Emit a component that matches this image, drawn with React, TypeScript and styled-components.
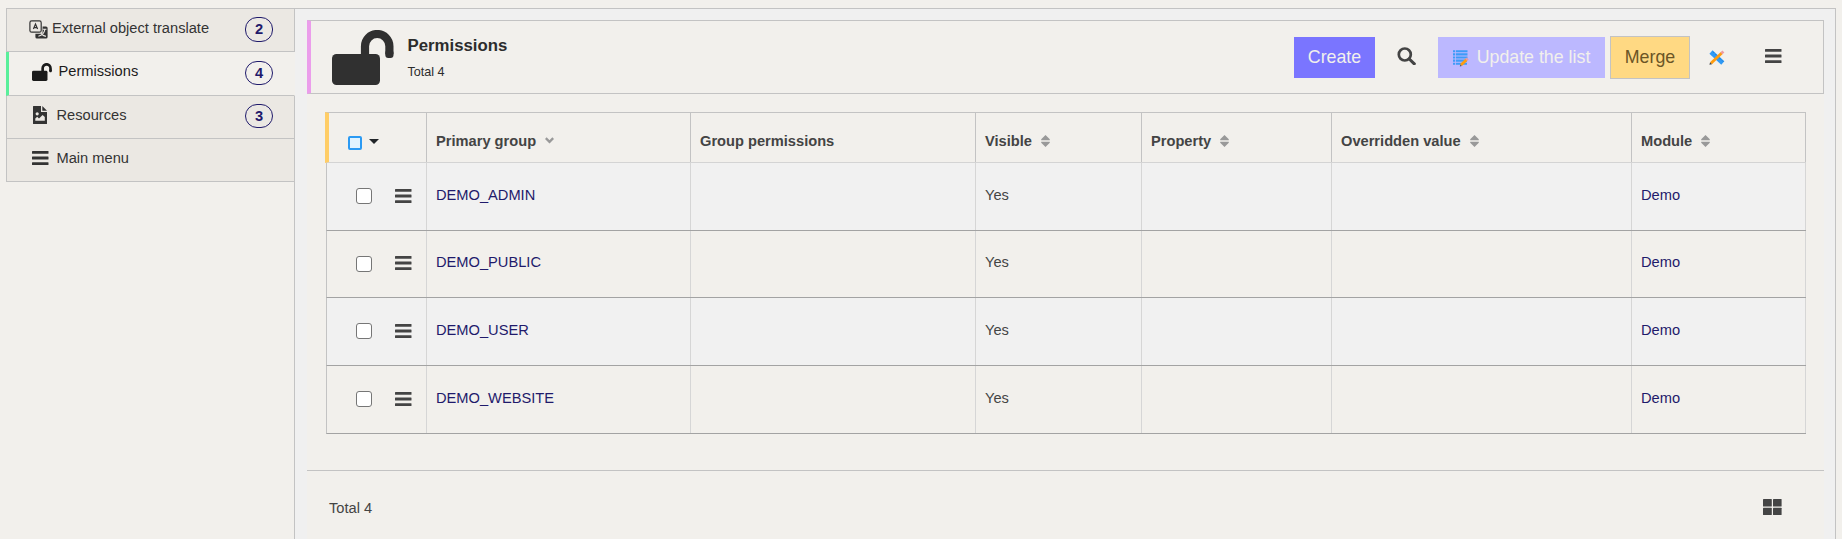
import React from "react";
import styled, { createGlobalStyle } from "styled-components";

const GlobalStyle = createGlobalStyle`
  * { box-sizing: border-box; }
  body { margin: 0; background: #f2f0ec; font-family: "Liberation Sans", Arial, sans-serif; font-size: 14.65px; color: #444; overflow: hidden; }
  svg { display: block; flex: none; }
`;

const line = "#c3c3c3";

const Page = styled.div`
  height: 539px;
  padding: 8px 6px 0;
  display: flex;
  background: #f2f0ec;
`;
const Sidebar = styled.nav`
  width: 289px;
  flex: none;
  border-top: 1px solid ${line};
  display: flex;
  flex-direction: column;
`;
const SideItem = styled.div<{ $h: number; $active?: boolean; $pad: number }>`
  height: ${(p) => p.$h}px;
  display: flex;
  flex: none;
  align-items: flex-start;
  padding: 0 21px 0 ${(p) => p.$pad}px;
  border-bottom: 1px solid ${line};
  border-left: ${(p) => (p.$active ? "3px solid #5aef9b" : `1px solid ${line}`)};
  border-right: 1px solid ${(p) => (p.$active ? "#f2f0ec" : line)};
  background: ${(p) => (p.$active ? "#f2f0ec" : "#ebe8e3")};
  color: ${(p) => (p.$active ? "#1b1b1b" : "#333")};
`;
const SideIcon = styled.span<{ $top: number; $w: number }>`
  width: ${(p) => p.$w}px;
  flex: none;
  padding-top: ${(p) => p.$top}px;
`;
const SideLabel = styled.span`
  flex: 1;
  line-height: 17px;
  padding-top: 11px;
`;
const Badge = styled.span<{ $top: number; $h?: number }>`
  width: 28px;
  height: ${(p) => p.$h ?? 24}px;
  margin-top: ${(p) => p.$top}px;
  border: 1px solid #1f1a6b;
  border-radius: 12px;
  color: #1f1a6b;
  font-weight: bold;
  line-height: ${(p) => (p.$h ?? 24) - 2}px;
  text-align: center;
`;
const SideRest = styled.div`
  flex: 1;
  border-right: 1px solid ${line};
`;

const Main = styled.main`
  flex: 1;
  padding: 11px 11px 0 12px;
  border: 1px solid ${line};
  border-width: 1px 1px 0 0;
  background: #f0f0f0;
  display: flex;
  flex-direction: column;
`;
const Header = styled.header`
  height: 74px;
  flex: none;
  display: flex;
  align-items: center;
  border: 1px solid ${line};
  border-left: 4px solid #eb9deb;
  padding: 0 41px 0 20.5px;
  background: #f2f0ec;
  color: #303030;
`;
const Titles = styled.div`
  flex: 1;
  padding-left: 14px;
  color: #2c2c2c;
`;
const Title = styled.h1`
  margin: 0 0 10px;
  font-size: 16.8px;
  line-height: 19px;
`;
const Subtitle = styled.div`
  font-size: 12.6px;
  line-height: 14px;
`;
const Button = styled.button<{ $kind: "primary" | "disabled" | "warn" }>`
  height: ${(p) => (p.$kind === "warn" ? 43 : 41)}px;
  width: ${(p) => ({ primary: 81, disabled: 167, warn: 80 })[p.$kind]}px;
  display: flex;
  align-items: center;
  justify-content: center;
  padding: 0;
  font: 17.8px "Liberation Sans", Arial, sans-serif;
  border: ${(p) => (p.$kind === "warn" ? `1px solid ${line}` : "0")};
  color: ${(p) => (p.$kind === "warn" ? "#6b5526" : "#f2f0ec")};
  background: ${(p) => ({ primary: "#7a75ff", disabled: "#bcb8ff", warn: "#ffd983" })[p.$kind]};
`;
const ToolIcon = styled.span<{ $l: number; $r: number; $up?: number }>`
  margin: 0 ${(p) => p.$r}px ${(p) => p.$up ?? 0}px ${(p) => p.$l}px;
  color: #444;
`;

const Content = styled.section`
  height: 377px;
  flex: none;
  padding: 18px 18px 0;
  border-bottom: 1px solid ${line};
  background: #f2f0ec;
`;
const Row = styled.div<{ $h?: number; $odd?: boolean }>`
  display: grid;
  grid-template-columns: 100px 264px 285px 166px 190px 300px 174px;
  width: 1480px;
  height: ${(p) => p.$h}px;
  margin-left: 1px;
  border-left: 1px solid ${line};
  border-bottom: 1px solid #a3a3a3;
  background: ${(p) => (p.$odd ? "#f1f1f1" : "#f2f0ec")};
`;
const HeadRow = styled(Row)`
  height: 51px;
  width: 1481px;
  margin-left: 0;
  border-top: 1px solid ${line};
  border-left: 4px solid #ffcd66;
  border-bottom: 1px solid #d4d4d4;
  grid-template-columns: 98px 264px 285px 166px 190px 300px 174px;
`;
const Cell = styled.div<{ $link?: boolean }>`
  border-right: 1px solid #d6d6d6;
  padding: 0 9px 4px;
  display: flex;
  align-items: center;
  color: ${(p) => (p.$link ? "#1f1a6b" : "#444")};
`;
const HeadCell = styled(Cell)`
  border-right-color: ${line};
  padding: 6px 9px 0;
  gap: 9px;
  font-weight: bold;
`;
const SelectAll = styled(HeadCell)`
  padding: 10px 0 0 19px;
  gap: 7px;
`;
const Caret = styled.svg`
  margin-bottom: 3px;
`;
const AllBox = styled.span`
  width: 14px;
  height: 14px;
  border: 2px solid #2b9af3;
  border-radius: 2px;
  background: #e0f3ff;
`;
const RowTools = styled(Cell)`
  padding: 0 0 1px 29px;
  gap: 23px;
  > svg { margin-bottom: 1px; }
`;
const Check = styled.input`
  appearance: none;
  width: 16px;
  height: 16px;
  margin: 0;
  border: 1px solid #767676;
  border-radius: 3px;
  background: #fff;
`;
const Footer = styled.footer`
  flex: 1;
  display: flex;
  justify-content: space-between;
  align-items: flex-start;
  padding: 28px 42px 0 22px;
  background: #f2f0ec;
`;
const FooterTotal = styled.span`
  padding-top: 1px;
`;

const Unlock = ({ w, h }: { w: number; h: number }) => (
  <svg width={w} height={h} viewBox="0 0 62 55" preserveAspectRatio="none" fill="currentColor">
    <rect x="0" y="24" width="48" height="31" rx="4.5" />
    <path d="M33 26V16a12.2 12.2 0 0 1 24.4 0v8" fill="none" stroke="currentColor" strokeWidth="8.2" transform="translate(0 .2)" />
    <rect x="53.3" y="20" width="8.2" height="8" rx="3" />
  </svg>
);
const Bars = () => (
  <svg width="17" height="14" viewBox="0 0 17 14" fill="currentColor">
    <rect width="16.5" height="2.8" rx=".5" /><rect y="5.6" width="16.5" height="2.8" rx=".5" /><rect y="11.2" width="16.5" height="2.8" rx=".5" />
  </svg>
);
const Translate = () => (
  <svg width="19" height="19" viewBox="0 0 19 19" fill="none" stroke="currentColor">
    <path d="M13.6 6.4H17a1.6 1.6 0 0 1 1.6 1.6v9a1.6 1.6 0 0 1-1.6 1.6H8a1.6 1.6 0 0 1-1.6-1.6v-3.2h5.6a1.6 1.6 0 0 0 1.6-1.6z" fill="currentColor" stroke="none" />
    <rect x=".9" y=".9" width="11.3" height="11.3" rx="1.8" strokeWidth="1.2" fill="#ebe8e3" />
    <path d="m4.4 9 2.1-5 2.1 5M5.1 7.6h2.8" strokeWidth="1.2" />
    <path d="M13.8 9.3h3.6M15.8 9.6c-.5 3-2.4 5.5-6.4 6.6M11.9 13.4c1.2 1.6 2.7 2.5 5 3" stroke="#ebe8e3" strokeWidth="1.1" />
  </svg>
);
const FileImage = () => (
  <svg width="14" height="18" viewBox="0 0 14 18">
    <path d="M.5 0H8v6h6v11.5a.5.5 0 0 1-.5.5H.5a.5.5 0 0 1-.5-.5V.5A.5.5 0 0 1 .5 0zM9.3 0 14 4.7H9.3z" fill="currentColor" />
    <circle cx="4.2" cy="7.8" r="1.6" fill="#ebe8e3" />
    <path d="M2.3 14.8v-2.3l1.9-1.8 1.8 1.7 3.6-3.5 2.2 2.1v3.8z" fill="#ebe8e3" />
  </svg>
);
const Search = () => (
  <svg width="19" height="18" viewBox="0 0 19 18" fill="none" stroke="#444">
    <circle cx="7.8" cy="7.5" r="6" strokeWidth="2.7" />
    <path d="m12.3 12 5 4.8" strokeWidth="3.1" strokeLinecap="round" />
  </svg>
);
const ListEdit = () => (
  <svg width="16" height="17" viewBox="0 0 16 17">
    <path d="M0 1.3h14.5M0 4.4h14.5M0 7.5h14.5M0 10.6h14M0 13.7h14" stroke="#3e9bf8" strokeWidth="2.1" />
    <path d="M2.5 0v15" stroke="#bcb8ff" strokeWidth=".8" />
    <path d="m8 15 5.5-5.3" stroke="#ff9c0d" strokeWidth="2.8" />
    <path d="m13.2 10 1.5-1.5" stroke="#e99aa5" strokeWidth="2.8" />
    <path d="m6.8 16.5.6-2 1.4 1.4z" fill="#555" />
  </svg>
);
const RulerPencil = () => (
  <svg width="16" height="15" viewBox="0 0 16 15">
    <path d="m2 2 11.8 11" stroke="#2f9af5" strokeWidth="4.6" />
    <path d="m4 1.8 1 1M6.5 4.2l1 1M10.8 8.3l1 1M13.2 10.5l1 1" stroke="#1565b8" strokeWidth=".7" />
    <path d="M2 13.2 12.7 3" stroke="#ff9c0d" strokeWidth="2.8" />
    <path d="m12.4 3.3 2-1.9" stroke="#ee9aa0" strokeWidth="2.8" />
    <path d="m.4 14.8.7-2.6 1.9 2z" fill="#444" />
  </svg>
);
const Sort = () => (
  <svg width="9" height="12" viewBox="0 0 9 12" fill="#999">
    <path d="M4.5 0 8.8 4.3V5.2H.2v-.9zM4.5 12 8.8 7.7V6.8H.2v.9z" />
  </svg>
);
const Chevron = () => (
  <svg width="9" height="7" viewBox="0 0 9 7" fill="none" stroke="#999" strokeWidth="2.4">
    <path d="m.8 1.2 3.7 3.6 3.7-3.6" />
  </svg>
);
const Tiles = () => (
  <svg width="19" height="16" viewBox="0 0 19 16" fill="#444">
    <rect width="8.8" height="7.5" rx=".6" /><rect x="10" width="8.6" height="7.5" rx=".6" />
    <rect y="8.7" width="8.8" height="7.3" rx=".6" /><rect x="10" y="8.7" width="8.6" height="7.3" rx=".6" />
  </svg>
);

const columns: [string, React.ReactNode][] = [
  ["Primary group", <Chevron />],
  ["Group permissions", null],
  ["Visible", <Sort />],
  ["Property", <Sort />],
  ["Overridden value", <Sort />],
  ["Module", <Sort />],
];
const rows: [string, number][] = [
  ["DEMO_ADMIN", 68],
  ["DEMO_PUBLIC", 67],
  ["DEMO_USER", 68],
  ["DEMO_WEBSITE", 68],
];

export default function App() {
  return (
    <>
      <GlobalStyle />
      <Page>
        <Sidebar>
          <SideItem $h={43} $pad={22}>
            <SideIcon $top={11} $w={23}><Translate /></SideIcon>
            <SideLabel>External object translate</SideLabel>
            <Badge $top={8} $h={25}>2</Badge>
          </SideItem>
          <SideItem $h={44} $pad={23} $active>
            <SideIcon $top={11} $w={26.5}><Unlock w={20} h={18} /></SideIcon>
            <SideLabel>Permissions</SideLabel>
            <Badge $top={9}>4</Badge>
          </SideItem>
          <SideItem $h={43} $pad={26}>
            <SideIcon $top={10} $w={23.5}><FileImage /></SideIcon>
            <SideLabel>Resources</SideLabel>
            <Badge $top={8}>3</Badge>
          </SideItem>
          <SideItem $h={43} $pad={25}>
            <SideIcon $top={12} $w={24.5}><Bars /></SideIcon>
            <SideLabel>Main menu</SideLabel>
          </SideItem>
          <SideRest />
        </Sidebar>
        <Main>
          <Header>
            <Unlock w={62} h={55} />
            <Titles>
              <Title>Permissions</Title>
              <Subtitle>Total 4</Subtitle>
            </Titles>
            <Button $kind="primary">Create</Button>
            <ToolIcon $l={22} $r={22} $up={2}><Search /></ToolIcon>
            <Button $kind="disabled"><ToolIcon $l={0} $r={8} $up={-3}><ListEdit /></ToolIcon>Update the list</Button>
            <ToolIcon $l={5} $r={0} />
            <Button $kind="warn">Merge</Button>
            <ToolIcon $l={19} $r={40}><RulerPencil /></ToolIcon>
            <ToolIcon $l={0} $r={0} $up={2}><Bars /></ToolIcon>
          </Header>
          <Content>
            <HeadRow>
              <SelectAll>
                <AllBox />
                <Caret width="10" height="5" viewBox="0 0 10 5"><path d="M0 0h10L5 5z" fill="#212529" /></Caret>
              </SelectAll>
              {columns.map(([name, icon]) => <HeadCell key={name}>{name}{icon}</HeadCell>)}
            </HeadRow>
            {rows.map(([name, h], i) => (
              <Row key={name} $h={h} $odd={i % 2 === 0}>
                <RowTools><Check type="checkbox" /><Bars /></RowTools>
                <Cell $link>{name}</Cell>
                <Cell />
                <Cell>Yes</Cell>
                <Cell />
                <Cell />
                <Cell $link>Demo</Cell>
              </Row>
            ))}
          </Content>
          <Footer>
            <FooterTotal>Total 4</FooterTotal>
            <Tiles />
          </Footer>
        </Main>
      </Page>
    </>
  );
}
